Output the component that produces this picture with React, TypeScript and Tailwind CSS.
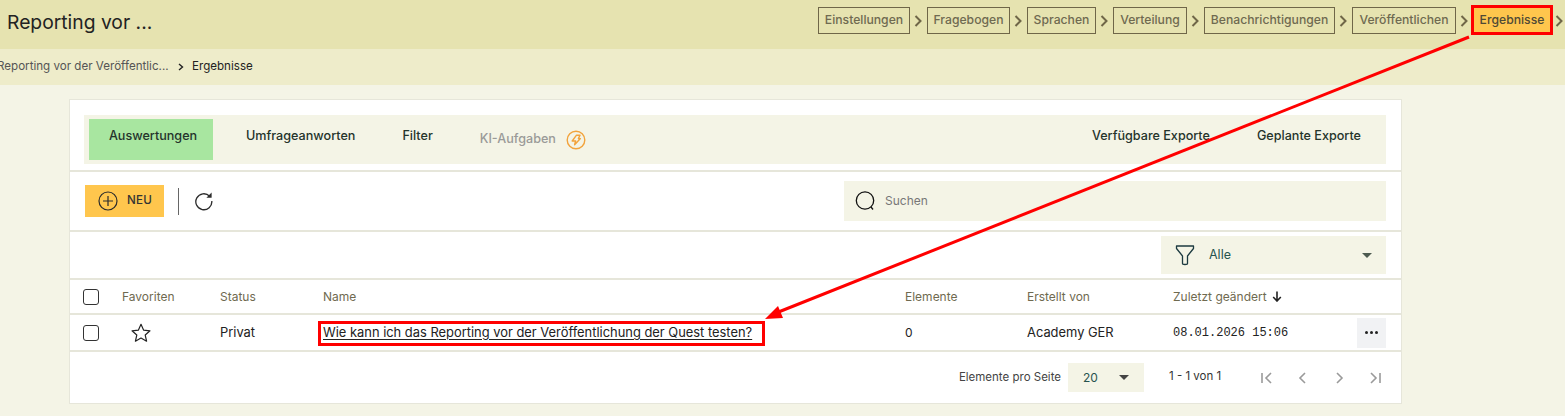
import React from "react";

const font = "font-['Inter','Noto_Sans',sans-serif]";

function Chevron() {
  return (
    <svg width="17" height="12" viewBox="0 0 17 12" className="shrink-0" fill="none" stroke="#6f6648" strokeWidth="2">
      <path d="M5.5 1 L10.5 6 L5.5 11" />
    </svg>
  );
}

function Step({ label, w, active }: { label: string; w: string; active?: boolean }) {
  return (
    <div
      className={`${w} shrink-0 h-[27px] flex items-center justify-center border border-[#6f6648] text-[12.2px] font-medium whitespace-nowrap ${
        active ? "bg-[#ffc64d] text-[#4f4a36]" : "text-[#6f6a50]"
      }`}
    >
      {label}
    </div>
  );
}

function Caret({ color = "#4d5a50" }: { color?: string }) {
  return (
    <svg width="10" height="5" viewBox="0 0 10 5">
      <path d="M0 0 H10 L5 5 Z" fill={color} />
    </svg>
  );
}

function Check() {
  return <div className="w-4 h-4 border border-[#333] rounded-[3px] bg-white" />;
}

function Pager({ d, bar }: { d: string; bar?: "l" | "r" }) {
  return (
    <svg width="14" height="14" viewBox="0 0 14 14" fill="none" stroke="#9a9a9a" strokeWidth="1.6">
      <path d={d} />
      {bar === "l" && <path d="M2 2 V12" />}
      {bar === "r" && <path d="M12 2 V12" />}
    </svg>
  );
}

export default function App() {
  return (
    <div className={`relative w-[1565px] h-[416px] overflow-hidden bg-[#f4f4e6] ${font} text-[#222]`}>
      {/* header */}
      <div className="h-[49px] bg-[#e6e3b0] flex items-center justify-between pl-[7px]">
        <div className="text-[19.3px] text-[#222] pb-[5px] whitespace-nowrap">Reporting vor ...</div>
        <div className="flex items-center pb-[8px] w-[751px] shrink-0 -mr-[4px]">
          <Step label="Einstellungen" w="w-[92px]" />
          <Chevron />
          <Step label="Fragebogen" w="w-[83px]" />
          <Chevron />
          <Step label="Sprachen" w="w-[69px]" />
          <Chevron />
          <Step label="Verteilung" w="w-[74px]" />
          <Chevron />
          <Step label="Benachrichtigungen" w="w-[131px]" />
          <Chevron />
          <Step label="Veröffentlichen" w="w-[104px]" />
          <Chevron />
          <Step label="Ergebnisse" w="w-[78px]" active />
          <Chevron />
        </div>
      </div>

      {/* breadcrumb */}
      <div className="h-[36px] bg-[#eeecca] flex items-center text-[11.6px]">
        <span className="text-[#555] w-[180px] -ml-[3px] shrink-0 whitespace-nowrap">Reporting vor der Veröffentlic...</span>
        <svg width="8" height="8" viewBox="0 0 8 8" fill="none" stroke="#222" strokeWidth="1.4" className="mr-[7px]">
          <path d="M2 1 L5.5 4 L2 7" />
        </svg>
        <span className="text-[#222]">Ergebnisse</span>
      </div>

      {/* card */}
      <div className="mt-[14px] ml-[69px] w-[1333px] h-[305px] bg-white border border-[#e6e6da] flex flex-col">
        {/* tabs */}
        <div className="h-[72px] border-b-2 border-[#e6e6da] pt-[15px] pl-[14px] pr-[15px] shrink-0">
          <div className="h-[49px] bg-[#f4f4e6] flex items-center justify-between pl-[5px] pr-[25px] text-[12.6px] font-medium text-[#24332b]">
            <div className="flex items-center">
              <div className="w-[124px] h-[41px] bg-[#a8e6a0] flex items-center justify-center pb-[7px] pl-[4px]">Auswertungen</div>
              <div className="ml-[33px] pb-[7px] h-[41px] flex items-center">Umfrageanworten</div>
              <div className="ml-[47px] pb-[7px] h-[41px] flex items-center">Filter</div>
              <div className="ml-[47px] flex items-center text-[#9a9a98] gap-[10px]">
                <span>KI-Aufgaben</span>
                <svg width="20" height="20" viewBox="0 0 20 20" fill="none" stroke="#f2a33c" strokeWidth="1.4" strokeLinejoin="round">
                  <circle cx="10" cy="10" r="8.8" />
                  <path d="M10.5 5.2 H14 L12.4 8.6 H14.4 L8.6 14.8 L9.6 11 H6.2 Z" />
                </svg>
              </div>
            </div>
            <div className="flex items-center gap-[47px] pb-[7px]">
              <span>Verfügbare Exporte</span>
              <span>Geplante Exporte</span>
            </div>
          </div>
        </div>

        {/* toolbar */}
        <div className="h-[60px] border-b-2 border-[#e6e6da] flex items-center pl-[15px] pr-[15px] shrink-0">
          <div className="w-[79px] h-[32px] bg-[#ffc64d] flex items-center pl-[13px] gap-[9px]">
            <svg width="20" height="20" viewBox="0 0 20 20" fill="none" stroke="#2c2c2c" strokeWidth="1.2">
              <circle cx="10" cy="10" r="9" />
              <path d="M10 5 V15 M5 10 H15" />
            </svg>
            <span className="text-[11.6px] font-medium tracking-[0.3px] text-[#333]">NEU</span>
          </div>
          <div className="ml-[14px] w-[1px] h-[27px] bg-[#666]" />
          <svg width="20" height="20" viewBox="0 0 20 20" fill="none" stroke="#2c2c2c" strokeWidth="1.3" className="ml-[15px]">
            <path d="M15.6 5.2 A8 8 0 1 0 17.8 10" />
            <path d="M17.6 1.6 V6.8 H12.4 Z" fill="#2c2c2c" stroke="none" />
          </svg>
          <div className="ml-auto w-[542px] h-[40px] bg-[#f4f4e6] flex items-center pl-[10px] gap-[9px]">
            <svg width="22" height="22" viewBox="0 0 22 22" fill="none" stroke="#111" strokeWidth="1.3">
              <circle cx="11" cy="10.5" r="8.7" />
              <path d="M17 17 L19 19.5" />
            </svg>
            <span className="text-[12px] text-[#777]">Suchen</span>
          </div>
        </div>

        {/* filter */}
        <div className="h-[48px] border-b-2 border-[#e6e6da] flex justify-end items-center pr-[15px] shrink-0">
          <div className="w-[225px] h-[38px] bg-[#f4f4e6] flex items-center pl-[14px] pr-[14px]">
            <svg width="20" height="22" viewBox="0 0 20 22" fill="none" stroke="#1c3a40" strokeWidth="1.3" strokeLinejoin="round">
              <path d="M1.5 2 H18.5 V4.5 L12.5 12 V19.5 Q12.5 20.5 10 20.5 Q7.5 20.5 7.5 19.5 V12 L1.5 4.5 Z" />
            </svg>
            <span className="ml-[14px] text-[12.5px] text-[#27534f]">Alle</span>
            <span className="ml-auto flex"><Caret /></span>
          </div>
        </div>

        {/* head */}
        <div className="h-[35px] border-b-2 border-[#e6e6da] flex items-center pl-[13px] text-[12px] text-[#6f6a50] shrink-0">
          <div className="w-[39px] flex"><Check /></div>
          <div className="w-[98px]">Favoriten</div>
          <div className="w-[103px]">Status</div>
          <div className="w-[582px]">Name</div>
          <div className="w-[122px]">Elemente</div>
          <div className="w-[146px]">Erstellt von</div>
          <div className="flex items-center gap-[5px]">
            <span>Zuletzt geändert</span>
            <svg width="10" height="11" viewBox="0 0 10 11" fill="none" stroke="#222" strokeWidth="1.6">
              <path d="M5 0.5 V10 M1.2 6 L5 10 L8.8 6" />
            </svg>
          </div>
        </div>

        {/* row */}
        <div className="h-[37px] border-b-2 border-[#e6e6da] flex items-center pl-[13px] text-[12.9px] text-[#222] shrink-0">
          <div className="w-[39px] flex"><Check /></div>
          <div className="w-[98px] flex pl-[8px]">
            <svg width="22" height="22" viewBox="0 0 24 24" fill="none" stroke="#222" strokeWidth="1.3" strokeLinejoin="round">
              <path d="M12 2.5 L14.9 8.9 L21.8 9.6 L16.6 14.2 L18.1 21 L12 17.5 L5.9 21 L7.4 14.2 L2.2 9.6 L9.1 8.9 Z" />
            </svg>
          </div>
          <div className="w-[103px]">Privat</div>
          <div className="w-[582px] underline underline-offset-2 whitespace-nowrap">Wie kann ich das Reporting vor der Veröffentlichung der Quest testen?</div>
          <div className="w-[122px] text-[12px]">0</div>
          <div className="w-[146px]">Academy GER</div>
          <div className="w-[184px] font-['Liberation_Mono',monospace] text-[12px] whitespace-pre">08.01.2026 15:06</div>
          <div className="w-[29px] h-[30px] bg-[#f1f2f4] flex items-center justify-center gap-[2px]">
            <span className="w-[3px] h-[3px] rounded-full bg-[#222]" />
            <span className="w-[3px] h-[3px] rounded-full bg-[#222]" />
            <span className="w-[3px] h-[3px] rounded-full bg-[#222]" />
          </div>
        </div>

        {/* pagination */}
        <div className="flex-1 flex items-center justify-end pr-[18px] text-[11.5px] text-[#333]">
          <span className="mr-[7px] text-[#444]">Elemente pro Seite</span>
          <div className="w-[76px] h-[29px] bg-[#f4f4e6] flex items-center pl-[15px] pr-[15px] text-[12px] text-[#27534f]">
            <span>20</span>
            <span className="ml-auto flex"><Caret color="#444" /></span>
          </div>
          <span className="ml-[25px] pb-[2px] w-[91px]">1 - 1 von 1</span>
          <div className="flex items-center gap-[22px] pr-[1px]">
            <Pager d="M11 2 L6 7 L11 12" bar="l" />
            <Pager d="M9 2 L4 7 L9 12" />
            <Pager d="M5 2 L10 7 L5 12" />
            <Pager d="M3 2 L8 7 L3 12" bar="r" />
          </div>
        </div>
      </div>

      {/* annotations */}
      <div className="absolute left-[1471px] top-[5px] w-[82px] h-[30px] border-[3px] border-[#ff0000]" />
      <div className="absolute left-[318px] top-[321px] w-[447px] h-[25px] border-[3px] border-[#ff0000]" />
      <svg className="absolute left-0 top-0 pointer-events-none" width="1565" height="416" viewBox="0 0 1565 416">
        <path d="M1469 37 L776 313" stroke="#ff0000" strokeWidth="3" fill="none" />
        <path d="M765 319 L778 306 L783 318 Z" fill="#ff0000" />
      </svg>
    </div>
  );
}
